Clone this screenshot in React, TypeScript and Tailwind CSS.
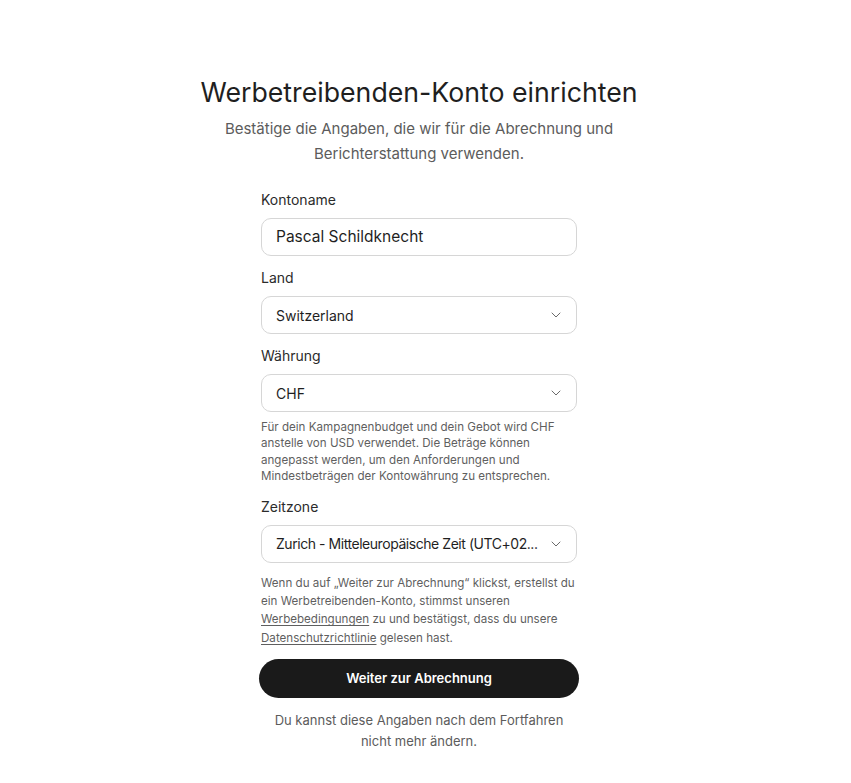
import { ChevronDown } from "lucide-react";

const font = { fontFamily: "Inter, 'Noto Sans', sans-serif" };

function Field({ label, value, select = false, size = "text-[14px]" }: { label: string; value: string; select?: boolean; size?: string }) {
  return (
    <div className="flex flex-col">
      <label className="text-[14px] leading-[20px] text-[#2b2b2b]">{label}</label>
      <div className="mt-2 flex h-[38px] items-center rounded-[10px] border border-[#d6d6d6] bg-white pl-[14px] pr-[12px]">
        <span className={`min-w-0 flex-1 truncate text-[#1f1f1f] ${size}`}>{value}</span>
        {select && <ChevronDown size={16} strokeWidth={1.5} className="ml-1 shrink-0 text-[#6b6b6b]" />}
      </div>
    </div>
  );
}

export default function App() {
  return (
    <div className="min-h-screen bg-white" style={font}>
      <div className="flex w-[838px] flex-col items-center pt-[76px]">
        <h1 className="text-[26.7px] leading-[32px] font-normal text-[#1f1f1f]">Werbetreibenden-Konto einrichten</h1>
        <p className="mt-2 w-[420px] text-center text-[15px] leading-[25px] text-[#5c5c5c]">
          Bestätige die Angaben, die wir für die Abrechnung und Berichterstattung verwenden.
        </p>

        <div className="mt-6 flex w-[316px] flex-col">
          <Field label="Kontoname" value="Pascal Schildknecht" size="text-[15.5px]" />
          <div className="mt-3">
            <Field label="Land" value="Switzerland" select />
          </div>
          <div className="mt-3">
            <Field label="Währung" value="CHF" select />
          </div>
          <p className="mt-[7px] text-[11.6px] leading-[16.4px] text-[#5f5f5f]">
            Für dein Kampagnenbudget und dein Gebot wird CHF anstelle von USD verwendet. Die Beträge können angepasst werden, um den Anforderungen und Mindestbeträgen der Kontowährung zu entsprechen.
          </p>
          <div className="mt-3">
            <Field label="Zeitzone" value="Zurich - Mitteleuropäische Zeit (UTC+02..." select size="text-[14px] tracking-[-0.45px]" />
          </div>
          <p className="mt-[11px] text-[11.6px] leading-[18.3px] text-[#5f5f5f]">
            Wenn du auf „Weiter zur Abrechnung“ klickst, erstellst du ein Werbetreibenden-Konto, stimmst unseren{" "}
            <a className="underline underline-offset-2">Werbebedingungen</a> zu und bestätigst, dass du unsere{" "}
            <a className="underline underline-offset-2">Datenschutzrichtlinie</a> gelesen hast.
          </p>
          <button className="mt-3 -mx-[2px] h-[39px] rounded-full bg-[#1a1a1a] text-[13px] font-semibold text-white">
            Weiter zur Abrechnung
          </button>
          <p className="mt-[12px] px-2 text-center text-[13px] leading-[21px] text-[#5c5c5c]">
            Du kannst diese Angaben nach dem Fortfahren nicht mehr ändern.
          </p>
        </div>
      </div>
    </div>
  );
}
